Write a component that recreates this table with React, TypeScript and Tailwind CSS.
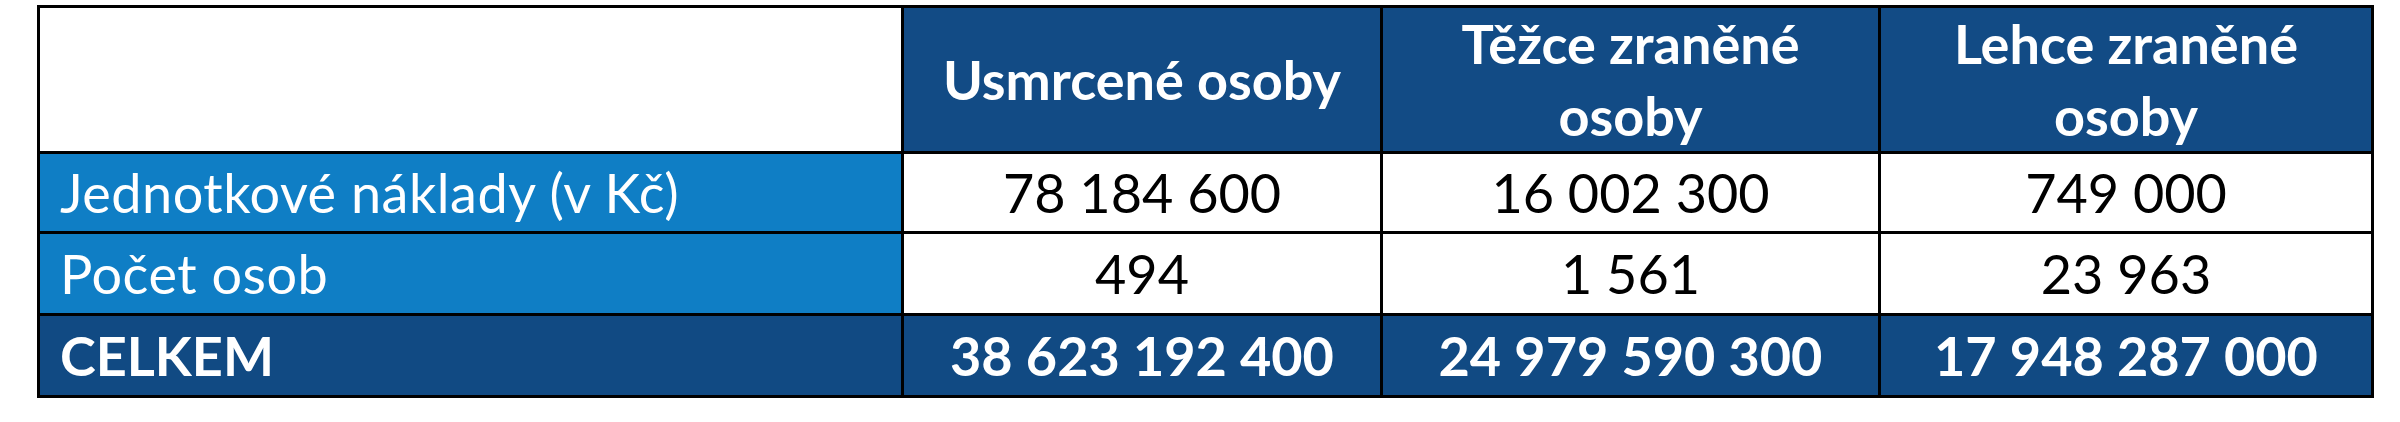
const rows = [
  { label: "Jednotkové náklady (v Kč)", values: ["78 184 600", "16 002 300", "749 000"] },
  { label: "Počet osob", values: ["494", "1 561", "23 963"] },
];

const totals = ["38 623 192 400", "24 979 590 300", "17 948 287 000"];

export default function App() {
  return (
    <div className="h-[422px] w-[2400px] bg-white pl-[37px] pt-[5px] font-['Lato','Open_Sans',sans-serif] text-[54px]">
      <div className="grid w-[2337px] grid-cols-[861px_476px_495px_490px] grid-rows-[143px_77px_79px_79px] gap-[3px] bg-black p-[3px]">
        {/* Header */}
        <div className="bg-white" />
        <div className="flex items-center justify-center bg-[#124b85] text-center font-bold leading-[72px] text-white">
          Usmrcené osoby
        </div>
        <div className="flex items-center justify-center bg-[#124b85] px-6 text-center font-bold leading-[72px] text-white">
          Těžce zraněné osoby
        </div>
        <div className="flex items-center justify-center bg-[#124b85] px-6 text-center font-bold leading-[72px] text-white">
          Lehce zraněné osoby
        </div>

        {/* Body rows */}
        {rows.map((row) => (
          <div key={row.label} className="contents">
            <div className="flex items-center bg-[#0f7ec5] pl-[20px] tracking-[0.5px] text-white">{row.label}</div>
            {row.values.map((v, i) => (
              <div key={i} className="flex items-center justify-center bg-white text-black">
                {v}
              </div>
            ))}
          </div>
        ))}

        {/* Totals */}
        <div className="flex items-center bg-[#114a83] pl-[20px] font-bold text-white">CELKEM</div>
        {totals.map((t, i) => (
          <div key={i} className="flex items-center justify-center bg-[#114a83] font-bold text-white">
            {t}
          </div>
        ))}
      </div>
    </div>
  );
}
